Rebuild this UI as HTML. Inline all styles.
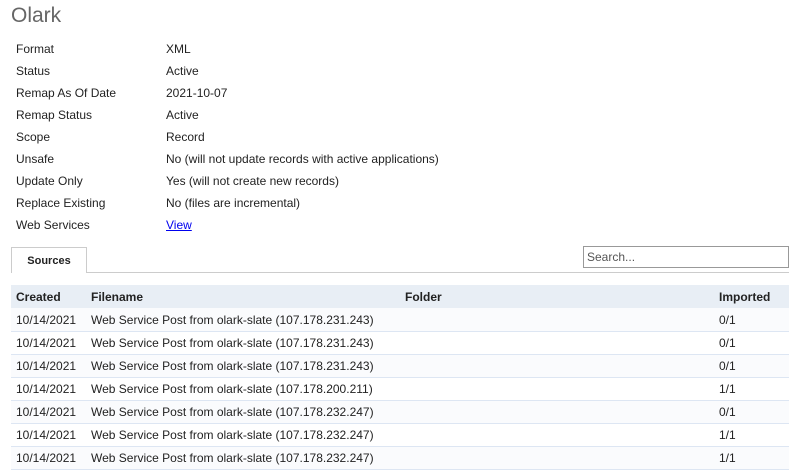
<!DOCTYPE html>
<html><head><style>
*{margin:0;padding:0;box-sizing:border-box}
body{width:798px;height:470px;background:#fff;font-family:"Liberation Sans",sans-serif;font-size:12px;color:#222;position:relative;overflow:hidden}
h1{position:absolute;left:11px;top:4px;font-size:21px;font-weight:normal;color:#666}
.kv{position:absolute;left:16px;font-size:12px;height:22px;line-height:22px}
.kv span{position:absolute;left:150px;white-space:nowrap}
.kv a{color:#00e;text-decoration:underline}
.tab{position:absolute;left:11px;top:247px;width:76px;height:26px;border:1px solid #ccc;border-bottom:none;background:#fff;font-weight:bold;font-size:11px;text-align:center;line-height:26px;z-index:2}
.tl{position:absolute;left:11px;top:272px;width:778px;border-top:1px solid #ccc}
.search{position:absolute;left:583px;top:246px;width:206px;height:22px;border:1px solid #999;font-size:12px;color:#555;padding-left:3px;line-height:20px}
table{position:absolute;left:11px;top:285px;width:778px;border-collapse:collapse;table-layout:fixed}
th{background:#e8eef5;text-align:left;font-weight:bold;height:23px;padding:1px 5px 0;font-size:12px}
td{height:23px;padding:1px 5px 0;border-bottom:1px solid #dde6f3;white-space:nowrap}
tr:nth-child(even) td{background:#fafbfd}
</style></head><body>
<h1>Olark</h1>
<div class="kv" style="top:38px">Format<span>XML</span></div>
<div class="kv" style="top:60px">Status<span>Active</span></div>
<div class="kv" style="top:82px">Remap As Of Date<span>2021-10-07</span></div>
<div class="kv" style="top:104px">Remap Status<span>Active</span></div>
<div class="kv" style="top:126px">Scope<span>Record</span></div>
<div class="kv" style="top:148px">Unsafe<span>No (will not update records with active applications)</span></div>
<div class="kv" style="top:170px">Update Only<span>Yes (will not create new records)</span></div>
<div class="kv" style="top:192px">Replace Existing<span>No (files are incremental)</span></div>
<div class="kv" style="top:214px">Web Services<span><a>View</a></span></div>
<div class="tab">Sources</div>
<div class="tl"></div>
<div class="search">Search...</div>
<table>
<tr><th style="width:75px">Created</th><th style="width:314px">Filename</th><th>Folder</th><th style="width:75px">Imported</th></tr>
<tr><td>10/14/2021</td><td>Web Service Post from olark-slate (107.178.231.243)</td><td></td><td>0/1</td></tr>
<tr><td>10/14/2021</td><td>Web Service Post from olark-slate (107.178.231.243)</td><td></td><td>0/1</td></tr>
<tr><td>10/14/2021</td><td>Web Service Post from olark-slate (107.178.231.243)</td><td></td><td>0/1</td></tr>
<tr><td>10/14/2021</td><td>Web Service Post from olark-slate (107.178.200.211)</td><td></td><td>1/1</td></tr>
<tr><td>10/14/2021</td><td>Web Service Post from olark-slate (107.178.232.247)</td><td></td><td>0/1</td></tr>
<tr><td>10/14/2021</td><td>Web Service Post from olark-slate (107.178.232.247)</td><td></td><td>1/1</td></tr>
<tr><td>10/14/2021</td><td>Web Service Post from olark-slate (107.178.232.247)</td><td></td><td>1/1</td></tr>
</table>
</body></html>
